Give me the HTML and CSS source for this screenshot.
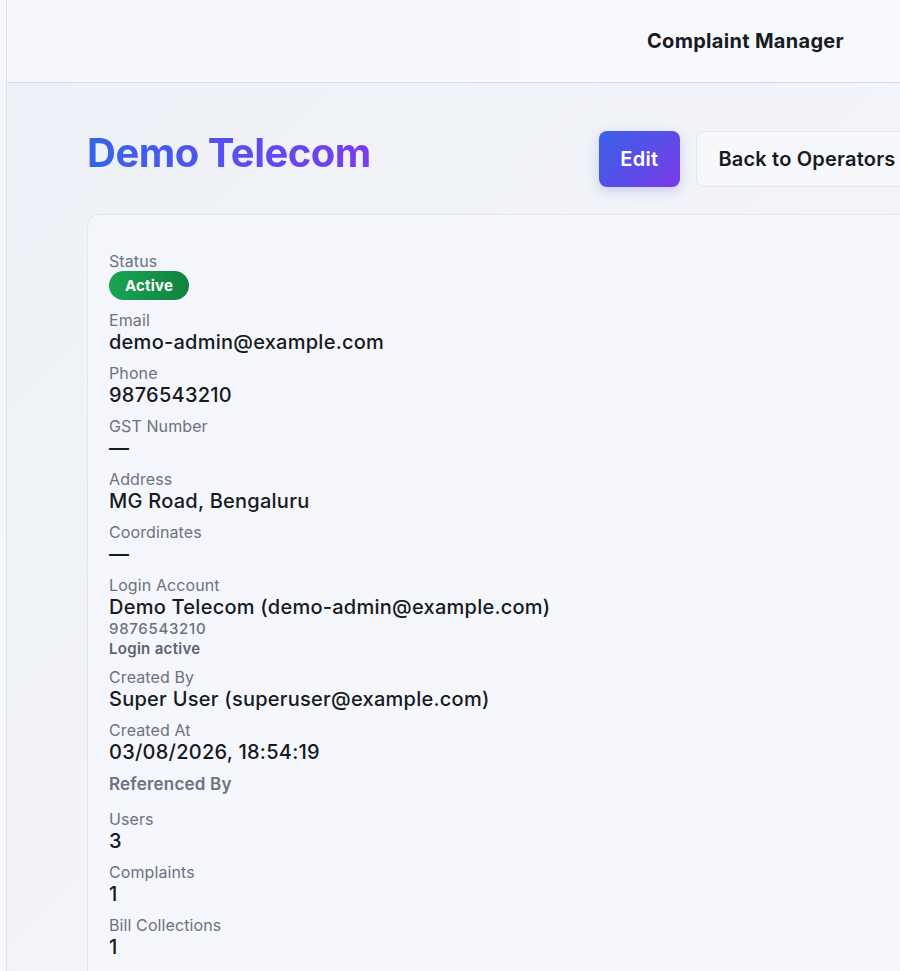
FILE: index.html
```html
<!DOCTYPE html>
<html lang="en">
<head>
<meta charset="utf-8">
<title>Demo Telecom</title>
<link rel="stylesheet" href="styles.css">
</head>
<body>
<div class="app">
  <aside class="sidebar"></aside>
  <div class="main">
    <header class="topbar">
      <span class="brand">Complaint Manager</span>
    </header>
    <section class="content">
      <div class="title-row">
        <h1 class="title">Demo Telecom</h1>
        <div class="actions">
          <button class="btn btn-primary">Edit</button>
          <button class="btn btn-secondary">Back to Operators</button>
        </div>
      </div>
      <div class="card">
        <div class="field">
          <div class="label">Status</div>
          <span class="badge">Active</span>
        </div>
        <div class="field">
          <div class="label">Email</div>
          <div class="value">demo-admin@example.com</div>
        </div>
        <div class="field">
          <div class="label">Phone</div>
          <div class="value">9876543210</div>
        </div>
        <div class="field">
          <div class="label">GST Number</div>
          <div class="value">—</div>
        </div>
        <div class="field">
          <div class="label">Address</div>
          <div class="value">MG Road, Bengaluru</div>
        </div>
        <div class="field">
          <div class="label">Coordinates</div>
          <div class="value">—</div>
        </div>
        <div class="field">
          <div class="label">Login Account</div>
          <div class="value">Demo Telecom (demo-admin@example.com)</div>
          <div class="sub">9876543210</div>
          <div class="sub sub-strong">Login active</div>
        </div>
        <div class="field">
          <div class="label">Created By</div>
          <div class="value">Super User (superuser@example.com)</div>
        </div>
        <div class="field">
          <div class="label">Created At</div>
          <div class="value">03/08/2026, 18:54:19</div>
        </div>
        <h2 class="section-title">Referenced By</h2>
        <div class="field">
          <div class="label">Users</div>
          <div class="value">3</div>
        </div>
        <div class="field">
          <div class="label">Complaints</div>
          <div class="value">1</div>
        </div>
        <div class="field">
          <div class="label">Bill Collections</div>
          <div class="value">1</div>
        </div>
      </div>
    </section>
  </div>
</div>
</body>
</html>
```
FILE: styles.css
```css
html, body {
  margin: 0;
  padding: 0;
  height: 100%;
  overflow: hidden;
}
body {
  font-family: Inter, "Noto Sans", "Liberation Sans", sans-serif;
  color: #161a22;
  background: #f5f6fa;
}
.app {
  display: flex;
  min-height: 100vh;
  width: 1000px;
}
.sidebar {
  width: 6px;
  flex: 0 0 6px;
  background: #f6f7fb;
  border-right: 1px solid #dfe2ea;
}
.main {
  flex: 1;
  display: flex;
  flex-direction: column;
  background: linear-gradient(135deg, #edf0f6 0%, #f2f4f9 50%, #f5f6fb 100%);
}
.topbar {
  height: 83px;
  box-sizing: border-box;
  display: flex;
  align-items: center;
  padding-left: 640px;
  background: linear-gradient(90deg, #f6f7fb 0%, #f8f9fd 100%);
  border-bottom: 1px solid #d6daee;
}
.brand {
  font-size: 20px;
  font-weight: 700;
  color: #181b24;
  letter-spacing: 0.3px;
}
.content {
  padding: 48px 0 0 80px;
}
.title-row {
  width: 831px;
  display: flex;
  justify-content: space-between;
  align-items: flex-start;
  margin-bottom: 27px;
}
.title {
  margin: 0;
  font-size: 40px;
  line-height: 44px;
  font-weight: 700;
  letter-spacing: -0.5px;
  background: linear-gradient(90deg, #3366e8 0%, #5a4ef0 55%, #7c3aed 100%);
  -webkit-background-clip: text;
  background-clip: text;
  color: transparent;
}
.actions {
  display: flex;
  gap: 16px;
}
.btn {
  height: 56px;
  padding: 0 21.5px;
  border-radius: 8px;
  font-family: inherit;
  font-size: 20px;
  font-weight: 600;
  cursor: pointer;
}
.btn-primary {
  border: none;
  color: #ffffff;
  background: linear-gradient(135deg, #3a62e8 0%, #5b4ce8 55%, #7b3aea 100%);
  box-shadow: 0 4px 12px rgba(80, 90, 230, 0.25);
  letter-spacing: 0.3px;
}
.btn-secondary {
  border: 1px solid #e2e5ec;
  color: #181b24;
  background: #f7f8fb;
  letter-spacing: 0.2px;
}
.card {
  width: 828px;
  box-sizing: border-box;
  min-height: 800px;
  padding: 36px 21px;
  border: 1px solid #e3e6ed;
  border-radius: 12px;
  background: linear-gradient(135deg, #f4f6fb 0%, #f7f8fc 100%);
}
.field {
  display: flex;
  flex-direction: column;
  align-items: flex-start;
  margin-bottom: 9px;
}
.label {
  font-size: 16px;
  line-height: 20px;
  color: #6b7280;
  letter-spacing: 0.1px;
}
.value {
  font-size: 20px;
  line-height: 24px;
  font-weight: 500;
  color: #161a22;
  letter-spacing: 0.25px;
}
.badge {
  display: inline-flex;
  align-items: center;
  height: 29px;
  padding: 0 16px;
  border-radius: 15px;
  font-size: 15px;
  font-weight: 700;
  color: #ffffff;
  background: linear-gradient(90deg, #18a552 0%, #12813f 100%);
  letter-spacing: 0.2px;
  margin-bottom: 1px;
}
.sub {
  font-size: 15px;
  line-height: 20px;
  font-weight: 500;
  color: #6b7280;
  letter-spacing: 0.7px;
}
.sub-strong {
  font-weight: 600;
  color: #5b6270;
  line-height: 19px;
  letter-spacing: 0.3px;
}
.section-title {
  margin: 2px 0 14px;
  font-size: 17px;
  line-height: 22px;
  font-weight: 600;
  color: #6b7280;
  letter-spacing: 0.2px;
}
```
